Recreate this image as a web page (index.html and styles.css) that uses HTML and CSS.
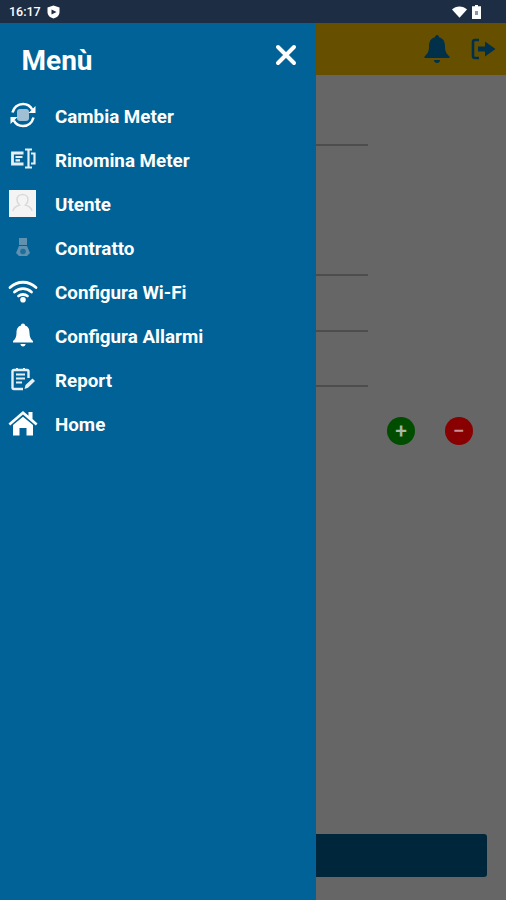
FILE: index.html
```html
<!DOCTYPE html>
<html>
<head>
	<title>Menù</title>
	<meta charset="utf-8">
	<link rel="stylesheet" href="styles.css">
</head>
<body>
	<!--Status bar-->
	<div class="status">
		<div class="status-left">
			<span class="clock">16:17</span>
			<svg class="shield" width="13" height="14" viewBox="0 0 13 14"><path d="M6.500 .5 12.500 2.500V7C12.500 10.500 10 12.500 6.500 13.500 3 12.500 .5 10.500 .5 7V2.500Z" fill="#fff"/><path d="M4.500 4.500 9.500 7 4.500 9.500Z" fill="#1d2d44"/></svg>
		</div>
		<div class="status-right">
			<svg width="15" height="12" viewBox="0 0 15 12"><path d="M0 3.500C2 1.400 4.600 .4 7.500 .4S13 1.400 15 3.500L7.500 11.800Z" fill="#fff"/></svg>
			<svg width="9" height="14" viewBox="0 0 9 14"><path d="M3 0H6V1.200H9V14H0V1.200H3Z" fill="#fff"/><rect x="3" y="6" width="3" height="4" fill="#8a97a8"/></svg>
		</div>
	</div>

	<div class="stage">
		<!--Page behind the drawer-->
		<div class="screen">
			<div class="topbar">
				<svg width="26" height="30" viewBox="0 0 26 30"><path d="M13 1C14.300 1 15 2 15 3.200 19.500 4.300 21 8 21 12.500 21 17.500 22.500 20 25.500 22.500V24H.5V22.500C3.500 20 5 17.500 5 12.500 5 8 6.500 4.300 11 3.200 11 2 11.700 1 13 1Z" fill="#00304a"/><path d="M10 26H16C16 27.800 14.700 29 13 29S10 27.800 10 26Z" fill="#00304a"/></svg>
				<svg width="25" height="22" viewBox="0 0 25 22"><path d="M8 2H4C2.700 2 2 2.700 2 4V18C2 19.300 2.700 20 4 20H8" fill="none" stroke="#00304a" stroke-width="2.600"/><path d="M7 8.500H14V3.500L24.500 11 14 18.500V13.500H7Z" fill="#00304a"/></svg>
			</div>
			<div class="form">
				<div class="rule first"></div>
				<div class="rule second"></div>
				<div class="rule third"></div>
				<div class="rule fourth"></div>
				<div class="round-btns">
					<div class="round plus">+</div>
					<div class="round minus">&minus;</div>
				</div>
			</div>
			<div class="bottom-btn"></div>
		</div>

		<!--Side menu-->
		<nav class="drawer">
			<div class="drawer-head">
				<h1>Menù</h1>
				<svg class="close" width="22" height="22" viewBox="0 0 22 22"><path d="M3 3 19 19M19 3 3 19" stroke="#fff" stroke-width="4" stroke-linecap="round"/></svg>
			</div>
			<ul class="menu">
				<li>
					<span class="ico"><svg width="28" height="28" viewBox="0 0 28 28"><rect x="8" y="8" width="12" height="12" rx="3" fill="#9fc0d4"/><path d="M3.500 11.500C4.800 6.500 9 3 14 3 18 3 21.500 5.200 23.200 8.500" fill="none" stroke="#fff" stroke-width="2.600"/><path d="M24.500 16.500C23.200 21.500 19 25 14 25 10 25 6.500 22.800 4.800 19.500" fill="none" stroke="#fff" stroke-width="2.600"/><path d="M26.500 5V12H19.500Z M1.500 23V16H8.500Z" fill="#fff"/></svg></span>
					Cambia Meter
				</li>
				<li>
					<span class="ico"><svg width="26" height="22" viewBox="0 0 26 22"><path d="M13.500 5H2.500V16H13.500" fill="none" stroke="#e6eff5" stroke-width="2.800"/><path d="M5.500 9H12.500M5.500 12.300H10" stroke="#e6eff5" stroke-width="2.200"/><path d="M15 1.500H22M15 19.500H22M18.500 1.500V19.500" fill="none" stroke="#e6eff5" stroke-width="2.200"/><path d="M21 5.500H24.500V15.500H21" fill="none" stroke="#e6eff5" stroke-width="2.200"/></svg></span>
					Rinomina Meter
				</li>
				<li>
					<span class="ico"><svg width="27" height="27" viewBox="0 0 27 27"><rect width="27" height="27" fill="#f4f4f4"/><path d="M4 21C4.500 17.500 7.500 16 10.500 15 8.500 13.500 8 11.500 8 9.500 8 6.500 10.500 4.500 13.500 4.500S19 6.500 19 9.500C19 11.500 18.500 13.500 16.500 15 19.500 16 22.500 17.500 23 21" fill="none" stroke="#dcd8d8" stroke-width="1.500"/></svg></span>
					Utente
				</li>
				<li>
					<span class="ico"><svg width="18" height="20" viewBox="0 0 18 20"><path d="M5 1H13V8H5Z" fill="#5f92b0"/><path d="M5 9H13L16 16 13 19H5L2 16Z" fill="#5f92b0"/><circle cx="9" cy="14.500" r="2.800" fill="#1f6f9c"/></svg></span>
					Contratto
				</li>
				<li>
					<span class="ico"><svg width="30" height="24" viewBox="0 0 30 24"><path d="M2 8.500C9.500 1.500 20.500 1.500 28 8.500M6.500 13C11.500 8.500 18.500 8.500 23.500 13M10.500 17C13 15 17 15 19.500 17" fill="none" stroke="#fff" stroke-width="2.800" stroke-linecap="round"/><circle cx="15" cy="20.800" r="2.800" fill="#fff"/></svg></span>
					Configura Wi-Fi
				</li>
				<li>
					<span class="ico"><svg width="22" height="24" viewBox="0 0 22 24"><path d="M11 .5C12.200 .5 13 1.300 13 2.500 16.500 3.500 17.500 6.500 17.500 10 17.500 14 19 16.500 21 18V19.500H1V18C3 16.500 4.500 14 4.500 10 4.500 6.500 5.500 3.500 9 2.500 9 1.300 9.800 .5 11 .5Z" fill="#fff"/><path d="M8.500 21H13.500C13.500 22.500 12.400 23.500 11 23.500S8.500 22.500 8.500 21Z" fill="#fff"/></svg></span>
					Configura Allarmi
				</li>
				<li>
					<span class="ico"><svg width="26" height="24" viewBox="0 0 26 24"><path d="M18.500 11V4.500C18.500 3.500 18 3 17 3H4C3 3 2.500 3.500 2.500 4.500V20.500C2.500 21.500 3 22 4 22H13" fill="none" stroke="#e6eff5" stroke-width="2.400"/><path d="M6 7.500H15M6 11.500H15M6 15.500H12M7 1V3M14 1V3" stroke="#e6eff5" stroke-width="2"/><path d="M14.500 22 15.500 18 22.500 11.500 25 14 18 20.800Z" fill="#e6eff5"/></svg></span>
					Report
				</li>
				<li>
					<span class="ico"><svg width="30" height="26" viewBox="0 0 30 26"><path d="M.5 13.500 15 1 20.500 5.700V2H24.500V9.100L29.500 13.500 27.800 15.500 15 4.500 2.200 15.500Z" fill="#fff"/><path d="M15 6.800 25 15V25.500H18.500V18H11.500V25.500H5V15Z" fill="#fff"/></svg></span>
					Home
				</li>
			</ul>
		</nav>
	</div>
</body>
</html>
```
FILE: styles.css
```css
*{
	box-sizing: border-box;
}

html, body{
	margin: 0;
	padding: 0;
	height: 100%;
}

body{
	display: flex;
	flex-direction: column;
	width: 506px;
	height: 900px;
	overflow: hidden;
	font-family: Roboto, "Liberation Sans", sans-serif;
	background: #666666;
}

.status{
	display: flex;
	justify-content: space-between;
	align-items: center;
	flex: 0 0 23px;
	padding: 0 25px 0 9px;
	background: #1d2d44;
	color: #fff;
}

.status-left, .status-right{
	display: flex;
	align-items: center;
}

.status-left{
	gap: 6px;
}

.status-right{
	gap: 5px;
}

.clock{
	font-size: 12.5px;
	font-weight: 500;
}

.stage{
	position: relative;
	flex: 1;
}

.screen{
	display: flex;
	flex-direction: column;
	height: 100%;
}

.topbar{
	display: flex;
	justify-content: flex-end;
	align-items: center;
	gap: 21px;
	height: 52px;
	padding: 0 10px 0 0;
	background: #665000;
}

.form{
	flex: 1;
	padding-left: 316px;
}

.rule{
	width: 52px;
	height: 2px;
	background: #4d4d4d;
}

.rule.first{
	margin-top: 69px;
}

.rule.second{
	margin-top: 128px;
}

.rule.third{
	margin-top: 54px;
}

.rule.fourth{
	margin-top: 53px;
}

.round-btns{
	display: flex;
	gap: 30px;
	margin: 30px 0 0 71px;
}

.round{
	display: flex;
	justify-content: center;
	align-items: center;
	width: 28px;
	height: 28px;
	border-radius: 50%;
	font-size: 21px;
	font-weight: 500;
	line-height: 1;
}

.plus{
	background: #004d00;
	color: #a8b8a8;
}

.minus{
	background: #880000;
	color: #c89090;
}

.bottom-btn{
	height: 43px;
	margin: 0 19px 23px 0;
	border-radius: 3px;
	background: #00263b;
}

.drawer{
	position: absolute;
	top: 0;
	left: 0;
	bottom: 0;
	width: 315.500px;
	background: #006296;
	color: #fff;
}

.drawer-head{
	display: flex;
	justify-content: space-between;
	align-items: flex-start;
	height: 70px;
	padding: 21px 19px 0 21.500px;
}

.drawer-head h1{
	margin: 0;
	font-size: 28px;
	font-weight: 700;
	line-height: 34px;
}

.menu{
	margin: 0;
	padding: 0;
	list-style: none;
}

.menu li{
	display: flex;
	align-items: center;
	height: 44px;
	padding-top: 4px;
	font-size: 18.800px;
	font-weight: 700;
}

.ico{
	display: flex;
	justify-content: center;
	align-items: center;
	flex: 0 0 55px;
	width: 55px;
	margin-top: -4px;
	padding-right: 10px;
}
```
